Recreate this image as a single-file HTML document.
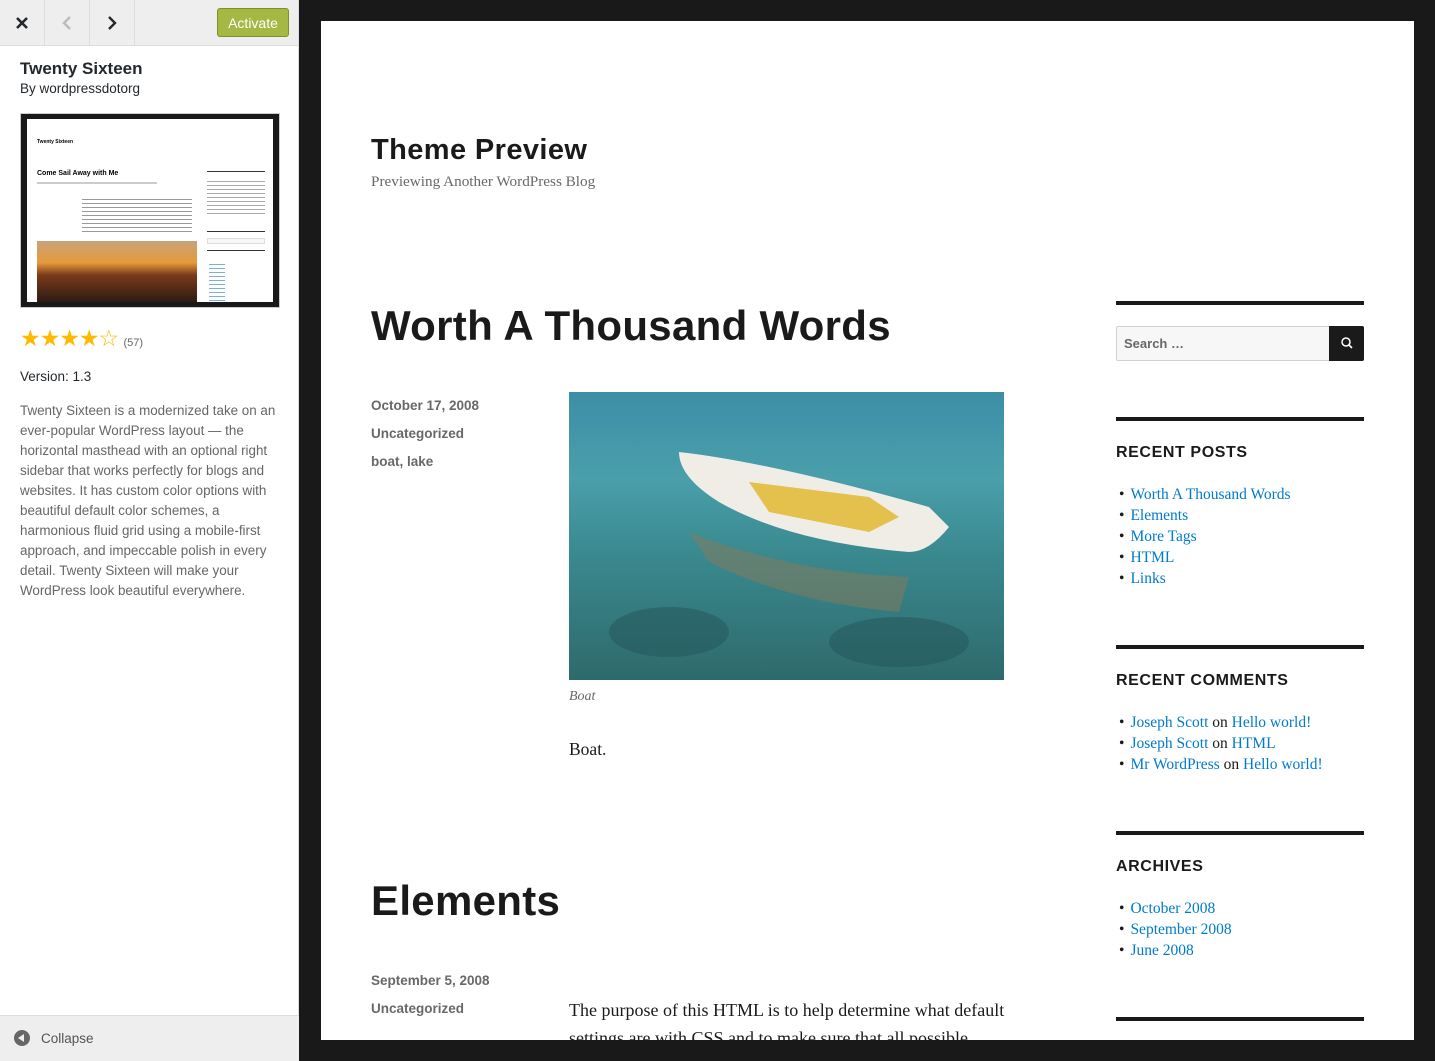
<!DOCTYPE html>
<html><head><meta charset="utf-8"><style>
*{margin:0;padding:0;box-sizing:border-box}
body{width:1435px;height:1061px;overflow:hidden;background:#191919;font-family:"Liberation Sans",sans-serif;position:relative}
#side{position:absolute;left:0;top:0;width:299px;height:1061px;background:#fff;border-right:1px solid #ddd}
#hdr{height:46px;background:#eee;border-bottom:1px solid #ddd;position:relative}
.hb{position:absolute;top:0;height:45px;width:45px;border-right:1px solid #ddd;display:flex;align-items:center;justify-content:center}
#act{position:absolute;left:217px;top:8px;width:72px;height:29px;background:#a4b843;border:1px solid #7f9028;border-radius:3px;color:#fff;font-size:14px;display:flex;align-items:center;justify-content:center}
.t{position:absolute;left:20px;color:#23282d}
#thumb{position:absolute;left:20px;top:113px;width:260px;height:195px;border:1px solid #ccc;background:#191919;padding:5px 6px}
#thumb .in{background:#fff;width:100%;height:100%;position:relative;overflow:hidden}
#desc{position:absolute;left:20px;top:401px;width:260px;font-size:13.4px;line-height:20px;color:#666}
#foot{position:absolute;left:0;bottom:0;width:299px;height:46px;background:#eee;border-top:1px solid #ddd}
#pv{position:absolute;left:321px;top:21px;width:1093px;height:1019px;background:#fff;overflow:hidden}
.ser{font-family:"Liberation Serif",serif}
.a{position:absolute}
.meta{font-size:13.5px;font-weight:bold;color:#686868}
.wt{border-top:4px solid #1a1a1a;width:248px;left:795px}
.wh{font-weight:bold;font-size:16px;letter-spacing:.6px;color:#1a1a1a;left:795px}
ul.l{list-style:none;left:795px;font-family:"Liberation Serif",serif;font-size:15.5px;line-height:21px;color:#1a1a1a}
ul.l li:before{content:"•";margin:0 6px 0 3px}
ul.l a{color:#007acc;text-decoration:none}
</style></head><body>
<div id="side">
 <div id="hdr">
  <div class="hb" style="left:0"><svg width="14" height="14"><path d="M2 2L12 12M12 2L2 12" stroke="#23282d" stroke-width="2.6"/></svg></div>
  <div class="hb" style="left:45px"><svg width="12" height="16"><path d="M9 2L3 8L9 14" stroke="#bbb" stroke-width="2.4" fill="none"/></svg></div>
  <div class="hb" style="left:90px"><svg width="12" height="16"><path d="M3 2L9 8L3 14" stroke="#23282d" stroke-width="2.4" fill="none"/></svg></div>
  <div id="act">Activate</div>
 </div>
 <div class="t" style="top:59px;font-size:17px;font-weight:bold">Twenty Sixteen</div>
 <div class="t" style="top:81px;font-size:13.5px">By wordpressdotorg</div>
 <div id="thumb"><div class="in">
  <div class="a" style="left:10px;top:20px;font-size:5px;font-weight:bold">Twenty Sixteen</div>
  <div class="a" style="left:10px;top:51px;font-size:7px;font-weight:bold">Come Sail Away with Me</div>
  <div class="a" style="left:10px;top:63px;width:120px;height:2px;background:#ccc"></div>
  <div class="a" style="left:55px;top:80px;width:110px;height:35px;background:repeating-linear-gradient(#999 0 1px,#fff 1px 4px)"></div>
  <div class="a" style="left:10px;top:122px;width:160px;height:62px;background:linear-gradient(#c9a27a,#e59a3a 35%,#7a3a1a 55%,#2a1a14)"></div>
  <div class="a" style="left:180px;top:52px;width:58px;height:1px;background:#333"></div>
  <div class="a" style="left:180px;top:62px;width:58px;height:35px;background:repeating-linear-gradient(#aaa 0 1px,#fff 1px 4px)"></div>
  <div class="a" style="left:180px;top:112px;width:58px;height:1px;background:#333"></div>
  <div class="a" style="left:180px;top:119px;width:58px;height:6px;border:1px solid #ddd;background:#f7f7f7"></div>
  <div class="a" style="left:180px;top:131px;width:58px;height:1px;background:#333"></div>
  <div class="a" style="left:182px;top:145px;width:16px;height:38px;background:repeating-linear-gradient(#7ab0e0 0 1px,#fff 1px 4px)"></div>
 </div></div>
 <div class="t" style="top:325px;font-size:23px;color:#ffb900;letter-spacing:-1px">★★★★☆ <span style="font-size:11px;color:#666;letter-spacing:0">(57)</span></div>
 <div class="t" style="top:369px;font-size:13.5px">Version: 1.3</div>
 <div id="desc">Twenty Sixteen is a modernized take on an ever-popular WordPress layout — the horizontal masthead with an optional right sidebar that works perfectly for blogs and websites. It has custom color options with beautiful default color schemes, a harmonious fluid grid using a mobile-first approach, and impeccable polish in every detail. Twenty Sixteen will make your WordPress look beautiful everywhere.</div>
 <div id="foot">
  <div class="a" style="left:14px;top:14px;width:16px;height:16px;border-radius:50%;background:#666"></div>
  <div class="a" style="left:18px;top:18px;width:0;height:0;border-top:4px solid transparent;border-bottom:4px solid transparent;border-right:6px solid #eee"></div>
  <div class="a" style="left:41px;top:15px;font-size:13.5px;color:#555">Collapse</div>
 </div>
</div>
<div id="pv">
 <div class="a" style="left:50px;top:113px;font-size:29px;font-weight:bold;color:#1a1a1a;letter-spacing:.4px">Theme Preview</div>
 <div class="a ser" style="left:50px;top:152px;font-size:15.2px;color:#686868">Previewing Another WordPress Blog</div>
 <div class="a" style="left:50px;top:281px;font-size:42px;font-weight:bold;color:#1a1a1a;letter-spacing:.3px">Worth A Thousand Words</div>
 <div class="a meta" style="left:50px;top:377px">October 17, 2008</div>
 <div class="a meta" style="left:50px;top:405px">Uncategorized</div>
 <div class="a meta" style="left:50px;top:433px">boat, lake</div>
 <div class="a" style="left:248px;top:371px;width:435px;height:288px;overflow:hidden;background:linear-gradient(#3c8ea6,#4a9fab 30%,#3a8a90 55%,#2e6a6c)">
  <svg width="435" height="288" style="position:absolute;left:0;top:0">
   <path d="M110 60 Q200 70 360 115 L380 135 Q360 160 340 160 Q220 150 150 110 Q110 85 110 60Z" fill="#efede6"/>
   <path d="M180 90 L300 105 L330 125 L300 140 L200 120Z" fill="#e0b830" opacity=".85"/>
   <path d="M120 140 Q220 180 340 185 L330 220 Q220 210 140 170Z" fill="#8a7a5a" opacity=".5"/>
   <ellipse cx="100" cy="240" rx="60" ry="25" fill="#24545a" opacity=".5"/>
   <ellipse cx="330" cy="250" rx="70" ry="25" fill="#24545a" opacity=".5"/>
  </svg>
 </div>
 <div class="a ser" style="left:248px;top:668px;font-size:14px;font-style:italic;color:#686868">Boat</div>
 <div class="a ser" style="left:248px;top:718px;font-size:17.5px;color:#1a1a1a">Boat.</div>
 <div class="a" style="left:50px;top:856px;font-size:42px;font-weight:bold;color:#1a1a1a;letter-spacing:.3px">Elements</div>
 <div class="a meta" style="left:50px;top:952px">September 5, 2008</div>
 <div class="a meta" style="left:50px;top:980px">Uncategorized</div>
 <div class="a ser" style="left:248px;top:975px;width:488px;font-size:18px;line-height:28px;color:#1a1a1a">The purpose of this HTML is to help determine what default settings are with CSS and to make sure that all possible</div>

 <div class="a wt" style="top:280px"></div>
 <div class="a" style="left:795px;top:305px;width:248px;height:35px;border:1px solid #d1d1d1;background:#f7f7f7;border-radius:2px"></div>
 <div class="a" style="left:803px;top:315px;font-size:13px;font-weight:bold;color:#686868">Search …</div>
 <div class="a" style="left:1008px;top:305px;width:35px;height:35px;background:#1a1a1a;border-radius:0 2px 2px 0"><svg width="35" height="35"><circle cx="17" cy="16" r="4" stroke="#fff" stroke-width="1.5" fill="none"/><path d="M20 19L23 22" stroke="#fff" stroke-width="1.6"/></svg></div>

 <div class="a wt" style="top:396px"></div>
 <div class="a wh" style="top:423px">RECENT POSTS</div>
 <ul class="a l" style="top:463px"><li><a>Worth A Thousand Words</a></li><li><a>Elements</a></li><li><a>More Tags</a></li><li><a>HTML</a></li><li><a>Links</a></li></ul>

 <div class="a wt" style="top:624px"></div>
 <div class="a wh" style="top:651px">RECENT COMMENTS</div>
 <ul class="a l" style="top:691px"><li><a>Joseph Scott</a> on <a>Hello world!</a></li><li><a>Joseph Scott</a> on <a>HTML</a></li><li><a>Mr WordPress</a> on <a>Hello world!</a></li></ul>

 <div class="a wt" style="top:810px"></div>
 <div class="a wh" style="top:837px">ARCHIVES</div>
 <ul class="a l" style="top:877px"><li><a>October 2008</a></li><li><a>September 2008</a></li><li><a>June 2008</a></li></ul>

 <div class="a wt" style="top:996px"></div>
</div>
</body></html>
